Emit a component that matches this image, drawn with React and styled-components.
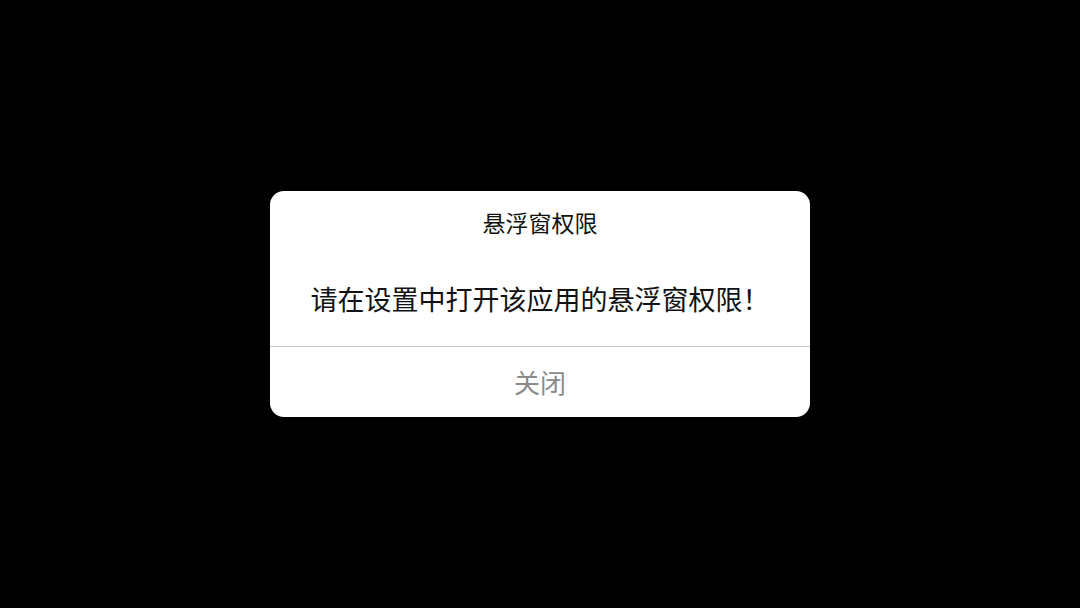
import React from 'react'
import styled, { createGlobalStyle } from 'styled-components';

const GlobalStyle = createGlobalStyle`
    html, body, #root {
        margin: 0;
        padding: 0;
        height: 100%;
        background: #000;
    }
    body {
        font-family: "Noto Sans CJK SC", "Noto Sans", sans-serif;
    }
`;

function App() {
    return (
        <>
            <GlobalStyle />
            <Screen>
                <Dialog>
                    <Title>悬浮窗权限</Title>
                    <Message>请在设置中打开该应用的悬浮窗权限！</Message>
                    <Footer>
                        <CloseButton>关闭</CloseButton>
                    </Footer>
                </Dialog>
            </Screen>
        </>
    )
}

const Screen = styled.div`
    width: 100%;
    height: 100%;
    display: flex;
    align-items: center;
    justify-content: center;
    background: #000;
`;

const Dialog = styled.div`
    width: 540px;
    background: #fff;
    border-radius: 14px;
    display: flex;
    flex-direction: column;
    overflow: hidden;
`;

const Title = styled.div`
    padding-top: 17px;
    height: 28px;
    line-height: 28px;
    font-size: 23px;
    color: #111;
    text-align: center;
`;

const Message = styled.div`
    margin-top: 45px;
    padding-bottom: 29px;
    line-height: 36px;
    font-size: 27px;
    color: #111;
    text-align: center;
    border-bottom: 1px solid #c8c8c8;
`;

const Footer = styled.div`
    height: 68px;
    padding-bottom: 2px;
    display: flex;
    align-items: center;
    justify-content: center;
`;

const CloseButton = styled.button`
    border: none;
    background: none;
    padding: 0;
    font-family: inherit;
    font-size: 26px;
    color: #8a8a8a;
    cursor: pointer;
`;

export default App
